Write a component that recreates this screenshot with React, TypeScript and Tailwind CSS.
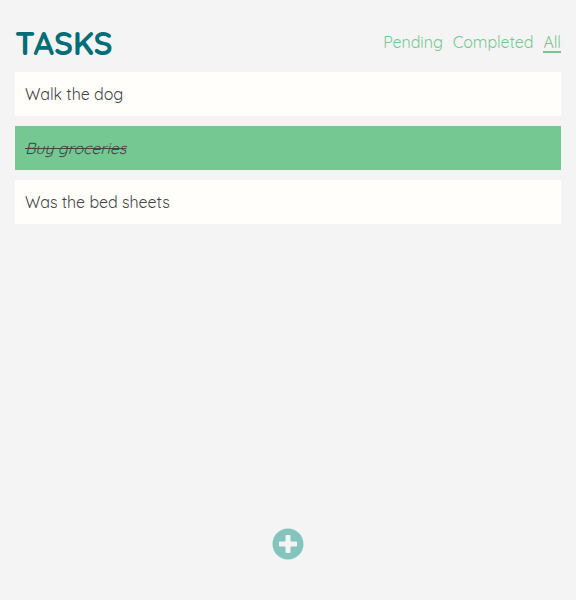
import React from "react";
import { FaPlusCircle } from "react-icons/fa";

const tasks = [
  { id: 1, label: "Walk the dog", done: false },
  { id: 2, label: "Buy groceries", done: true },
  { id: 3, label: "Was the bed sheets", done: false },
];

export default function App() {
  return (
    <main className="flex h-[600px] w-full flex-col bg-[#f4f4f4] px-[15px] pt-[20px] pb-[40px] font-['Quicksand','Lato','Open_Sans',sans-serif] text-base leading-[24px] tracking-[-0.05px] text-[#444444]">
      <header className="flex h-[52px] items-start justify-between">
        <h1 className="text-[32px] leading-[46px] font-bold tracking-normal text-[#006d77]">TASKS</h1>
        <nav className="mt-[10px] flex gap-[10px] text-[#76c893]">
          <a>Pending</a>
          <a>Completed</a>
          <a className="h-[23px] border-b-2 border-[#76c893]">All</a>
        </nav>
      </header>
      <ul className="flex flex-col gap-[10px]">
        {tasks.map((t) => (
          <li
            key={t.id}
            className={`flex h-[44px] items-center px-[10px] ${t.done ? "bg-[#76c893] italic line-through" : "bg-[#fffefa]"}`}
          >
            {t.label}
          </li>
        ))}
      </ul>
      <button className="mt-auto self-center text-[#83c5be]">
        <FaPlusCircle size={32} />
      </button>
    </main>
  );
}
